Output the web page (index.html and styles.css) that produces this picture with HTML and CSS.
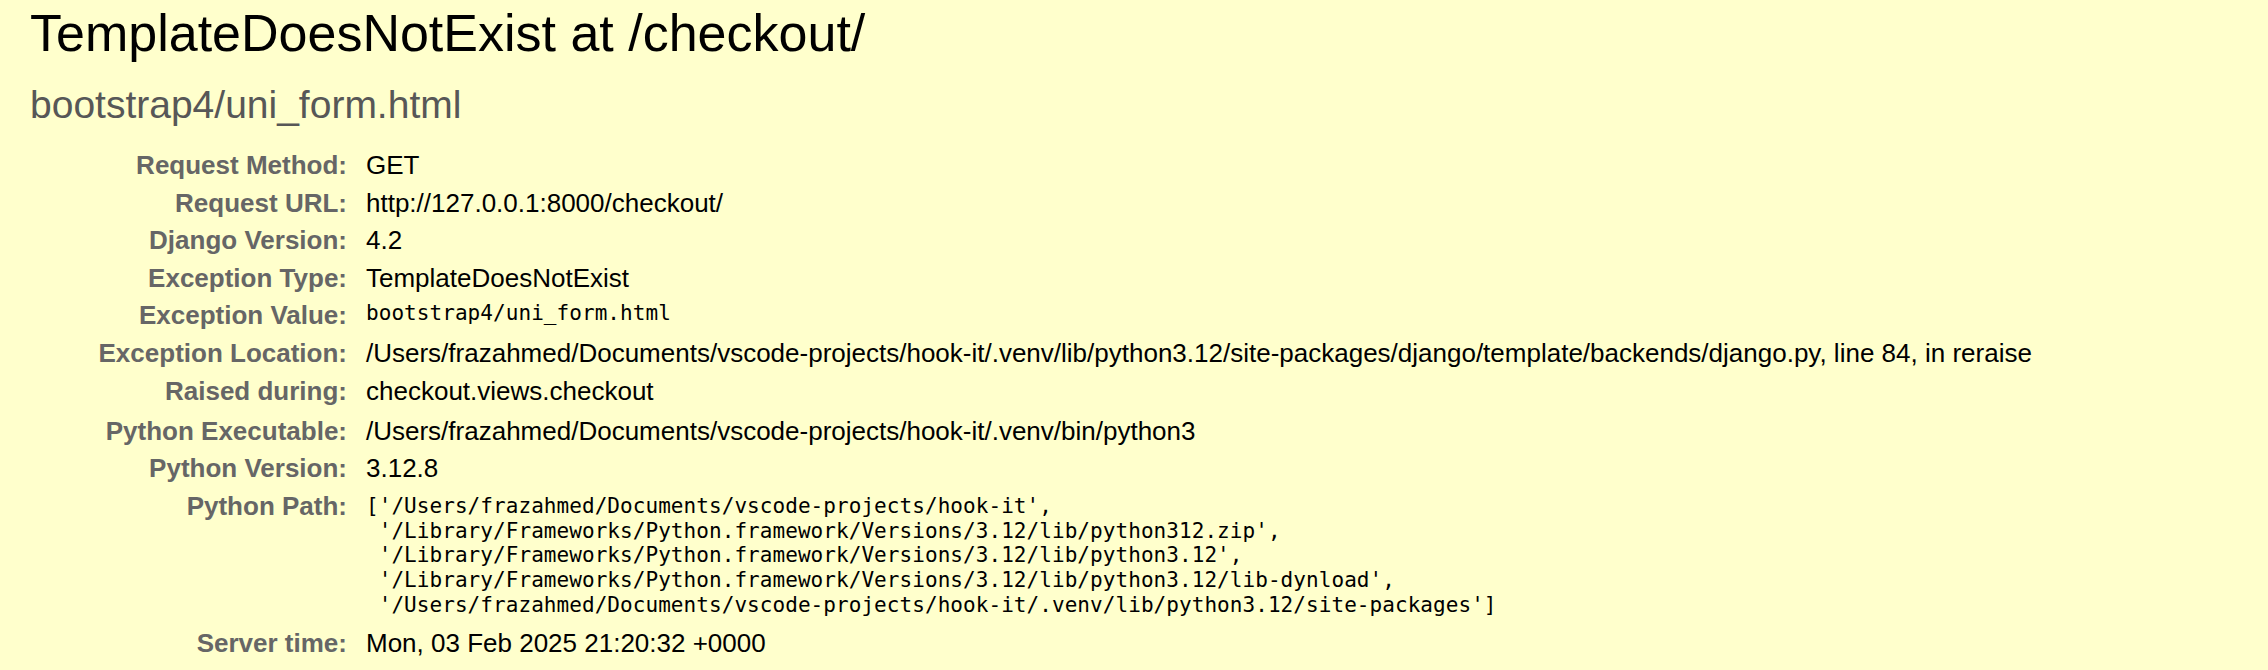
FILE: index.html
```html
<!DOCTYPE html>
<html lang="en">
<head>
<meta charset="utf-8">
<title>TemplateDoesNotExist at /checkout/</title>
<link rel="stylesheet" href="styles.css">
</head>
<body>
<div class="summary">
  <h1 class="title">TemplateDoesNotExist at /checkout/</h1>
  <pre class="exception-value">bootstrap4/uni_form.html</pre>
  <table class="meta">
    <tbody>
      <tr><th>Request Method:</th><td>GET</td></tr>
      <tr><th>Request URL:</th><td>http://127.0.0.1:8000/checkout/</td></tr>
      <tr><th>Django Version:</th><td>4.2</td></tr>
      <tr><th>Exception Type:</th><td>TemplateDoesNotExist</td></tr>
      <tr><th>Exception Value:</th><td><pre class="mono">bootstrap4/uni_form.html</pre></td></tr>
      <tr><th>Exception Location:</th><td>/Users/frazahmed/Documents/vscode-projects/hook-it/.venv/lib/python3.12/site-packages/django/template/backends/django.py, line 84, in reraise</td></tr>
      <tr class="row-raised"><th>Raised during:</th><td>checkout.views.checkout</td></tr>
      <tr><th>Python Executable:</th><td>/Users/frazahmed/Documents/vscode-projects/hook-it/.venv/bin/python3</td></tr>
      <tr><th>Python Version:</th><td>3.12.8</td></tr>
      <tr><th>Python Path:</th><td><pre class="mono path">['/Users/frazahmed/Documents/vscode-projects/hook-it',
 '/Library/Frameworks/Python.framework/Versions/3.12/lib/python312.zip',
 '/Library/Frameworks/Python.framework/Versions/3.12/lib/python3.12',
 '/Library/Frameworks/Python.framework/Versions/3.12/lib/python3.12/lib-dynload',
 '/Users/frazahmed/Documents/vscode-projects/hook-it/.venv/lib/python3.12/site-packages']</pre></td></tr>
      <tr><th>Server time:</th><td>Mon, 03 Feb 2025 21:20:32 +0000</td></tr>
    </tbody>
  </table>
</div>
</body>
</html>
```
FILE: styles.css
```css
* {
  margin: 0;
  padding: 0;
}

html, body {
  background: #ffffcc;
}

body {
  font-family: "Liberation Sans", Arial, Helvetica, sans-serif;
  font-size: 26px;
  color: #000;
  overflow: hidden;
}

.summary {
  background: #ffffcc;
  padding: 3px 30px 0 30px;
}

.title {
  font-size: 52px;
  line-height: 60px;
  font-weight: normal;
  color: #000;
}

.exception-value {
  font-family: "Liberation Sans", Arial, Helvetica, sans-serif;
  font-size: 39px;
  line-height: 45px;
  color: #575757;
  margin: 19px 0 20px 0;
  white-space: pre-wrap;
}

.meta {
  border: none;
  border-collapse: collapse;
  background: transparent;
}

.meta th,
.meta td {
  vertical-align: top;
  line-height: 29.6px;
  padding: 4px 6px;
}

.meta th {
  width: 311px;
  text-align: right;
  color: #666;
  font-weight: bold;
  padding-right: 13px;
  white-space: nowrap;
}

.meta td {
  white-space: nowrap;
}

.row-raised th,
.row-raised td {
  padding-bottom: 6.5px;
}

.mono {
  font-family: "DejaVu Sans Mono", Menlo, "Liberation Mono", monospace;
  font-size: 21px;
  line-height: 24.8px;
  letter-spacing: 0.06px;
  white-space: pre;
}

.path {
  padding: 2px 0 3px 0;
}
```
